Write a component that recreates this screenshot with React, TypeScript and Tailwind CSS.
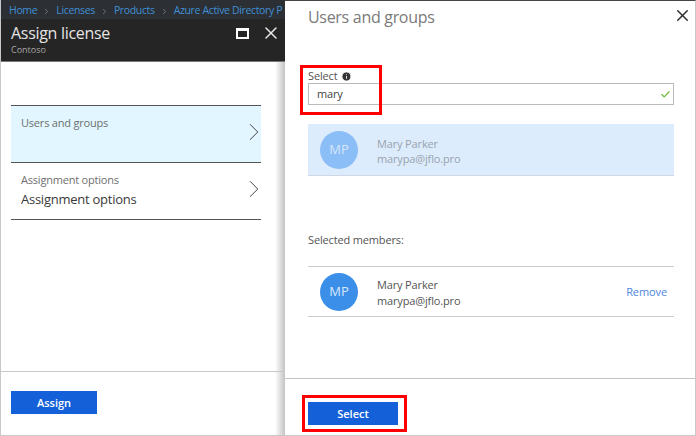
import React from 'react';
import { X, Check, ChevronRight, Info } from 'lucide-react';

const font = "font-['Open_Sans','Noto_Sans',sans-serif]";

const MenuItem = ({ label, value, active }: { label: string; value?: string; active?: boolean }) => (
  <div className={`h-[57px] border-t border-[#555] flex items-center justify-between pl-[10px] ${active ? 'bg-[#e1f6fe]' : ''}`}>
    <div className="self-start pt-[9px]">
      <div className="text-[11px] leading-[16px] tracking-[-0.2px] text-[#6f6f6f]">{label}</div>
      {value && <div className="text-[13px] leading-[20px] tracking-[-0.25px] text-[#3a3a3a] mt-[1px]">{value}</div>}
    </div>
    <ChevronRight size={30} strokeWidth={0.8} className="text-[#444] -mr-[8px] -mt-[4px]" />
  </div>
);

const Member = ({ faded }: { faded?: boolean }) => (
  <div className="flex items-center pl-[12px]">
    <div className={`w-[38px] h-[38px] rounded-full flex items-center justify-center text-[13px] ${faded ? 'bg-[#8bbdf7] text-[#d5e6fb]' : 'bg-[#3b8fe8] text-[#d8e8fb]'}`}>MP</div>
    <div className={`ml-[19px] text-[11px] tracking-[-0.15px] ${faded ? 'leading-[15px] mt-[3px] text-[#9aa3ad] font-medium' : 'leading-[16px] mt-[2px] text-[#555]'}`}>
      <div>Mary Parker</div>
      <div>marypa@jflo.pro</div>
    </div>
  </div>
);

export default function App() {
  return (
    <div className={`${font} relative w-[696px] h-[436px] bg-white overflow-hidden flex`}>
      {/* blade behind */}
      <div className="w-[285px] h-full flex flex-col border-l border-b border-[#c8c8c8] bg-white">
        <div className="h-[19px] bg-[#2c2f33] flex items-center pt-[3px] pl-[8px] gap-[5px] text-[10.5px] tracking-[-0.35px] text-[#3f8fd6] whitespace-nowrap overflow-hidden shrink-0">
          <span>Home</span><ChevronRight size={9} className="text-[#8a8a8a] shrink-0" />
          <span>Licenses</span><ChevronRight size={9} className="text-[#8a8a8a] shrink-0" />
          <span>Products</span><ChevronRight size={9} className="text-[#8a8a8a] shrink-0" />
          <span>Azure Active Directory P</span>
        </div>
        <div className="h-[43px] bg-[#252525] border-b border-[#777] flex items-start justify-between pl-[10px] pr-[4px] shrink-0">
          <div>
            <div className="text-[16px] leading-[22px] tracking-[-0.3px] text-[#e4e4e4] mt-[3px]">Assign license</div>
            <div className="text-[9px] leading-[12px] text-[#a8a8a8]">Contoso</div>
          </div>
          <div className="flex items-center gap-[12px] mt-[4px]">
            <div className="w-[13px] h-[11px] border-2 border-t-[3px] border-white"></div>
            <X size={20} strokeWidth={1.8} className="text-[#e8e8e8]" />
          </div>
        </div>
        <div className="flex-1 flex flex-col bg-gradient-to-r from-white from-[96.5%] to-[#c4c4c4]">
          <div className="pt-[43px] pl-[10px] w-[260px]">
            <MenuItem label="Users and groups" active />
            <MenuItem label="Assignment options" value="Assignment options" />
            <div className="border-t border-[#555]"></div>
          </div>
          <div className="mt-auto h-[64px] border-t border-[#c8c8c8] pt-[19px] pl-[10px]">
            <button className="block w-[86px] h-[23px] pt-[2px] bg-[#1460d8] text-white text-[11px] font-semibold">Assign</button>
          </div>
        </div>
      </div>

      {/* active blade */}
      <div className="flex-1 h-full flex flex-col border-t border-[#444] border-r border-r-[#c8c8c8] border-b border-b-[#c8c8c8]">
        <div className="flex-1 pl-[23px] pr-[21px]">
          <div className="flex items-start justify-between h-[66px]">
            <div className="text-[16px] leading-[22px] tracking-[-0.3px] text-[#7a7a7a] mt-[5px]">Users and groups</div>
            <X size={19} strokeWidth={1.9} className="text-[#333] mt-[5px] -mr-[18px]" />
          </div>
          <div className="h-[16px] pt-[2px] flex items-center gap-[4px] text-[11px] leading-[16px] tracking-[-0.15px] text-[#555]">
            Select <Info size={11} fill="#333" stroke="#fff" strokeWidth={2} />
          </div>
          <div className="h-[22px] border border-[#bbb] flex items-center justify-between pl-[8px] pr-[2px] text-[11px] tracking-[-0.2px] text-[#444]">
            mary
            <Check size={11} strokeWidth={2.5} className="text-[#68b82e]" />
          </div>
          <div className="mt-[19px] h-[52px] bg-[#dcecfd] border-b border-[#cfd8e2] flex items-center">
            <Member faded />
          </div>
          <div className="mt-[56px] text-[11px] leading-[16px] tracking-[-0.15px] text-[#555]">Selected members:</div>
          <div className="mt-[18px] h-[51px] border-t border-b border-[#ccc] flex items-center justify-between pr-[7px]">
            <Member />
            <span className="text-[11px] tracking-[-0.1px] text-[#4c86e0] mt-[1px]">Remove</span>
          </div>
        </div>
        <div className="h-[57px] border-t border-[#c4c4c4] pt-[23px] pl-[23px] shrink-0">
          <button className="block w-[90px] h-[23px] pt-[2px] bg-[#1460d8] text-white text-[11px] font-semibold">Select</button>
        </div>
      </div>

      {/* callouts */}
      <div className="absolute left-[300px] top-[65px] w-[82px] h-[50px] border-[3px] border-[#f00]"></div>
      <div className="absolute left-[302px] top-[395px] w-[105px] h-[37px] border-[3px] border-[#f00]"></div>
    </div>
  );
}
